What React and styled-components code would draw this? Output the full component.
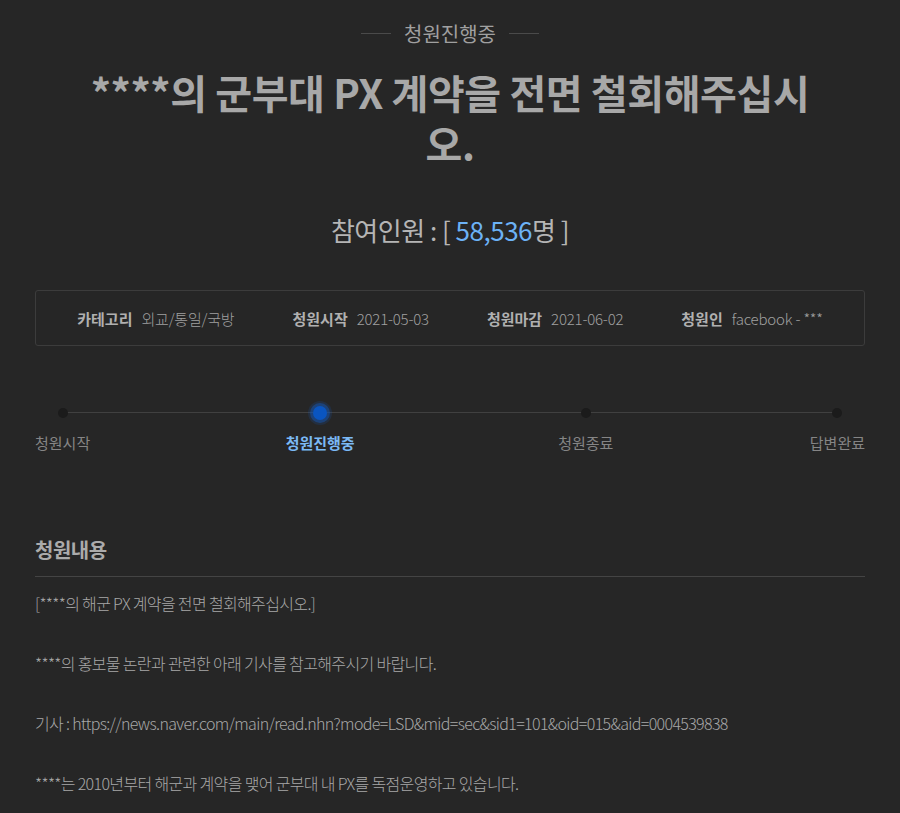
import React from "react";
import styled, { createGlobalStyle } from "styled-components";

const GlobalStyle = createGlobalStyle`
  html, body {
    margin: 0;
    padding: 0;
    background-color: #262626;
  }
  body {
    font-family: "Noto Sans CJK KR", "Noto Sans", sans-serif;
    color: #aaaaaa;
  }
  * {
    box-sizing: border-box;
  }
`;

const Page = styled.div`
  width: 830px;
  margin: 0 auto;
  padding-top: 15px;
`;

const StatusLabel = styled.div`
  display: flex;
  align-items: center;
  justify-content: center;
  gap: 13px;
  font-size: 20px;
  color: #a0a0a0;
  height: 36px;
  &::before,
  &::after {
    content: "";
    width: 30px;
    height: 1px;
    background-color: #4a4a4a;
  }
`;

const Headline = styled.h1`
  width: 740px;
  margin: 16px auto 0;
  text-align: center;
  font-size: 40px;
  line-height: 51px;
  font-weight: 700;
  color: #a8a8a8;
  letter-spacing: -0.4px;
`;

const Count = styled.div`
  margin-top: 42px;
  text-align: center;
  font-size: 26px;
  color: #b5b5b5;
  letter-spacing: -0.5px;
`;

const CountNum = styled.span`
  color: #6cb2f6;
`;

const InfoBox = styled.div`
  margin-top: 42px;
  height: 56px;
  border: 1px solid #3c3c3c;
  border-radius: 3px;
  display: flex;
  align-items: center;
  justify-content: center;
  gap: 58px;
`;

const InfoItem = styled.div`
  display: flex;
  align-items: center;
  gap: 9px;
  font-size: 15px;
`;

const InfoKey = styled.span`
  font-weight: 700;
  color: #b0b0b0;
`;

const InfoValue = styled.span`
  font-weight: 300;
  color: #a0a0a0;
  letter-spacing: -0.2px;
`;

const Stepper = styled.ol`
  position: relative;
  list-style: none;
  margin: 58px 0 0;
  padding: 0;
  display: flex;
  justify-content: space-between;
  &::before {
    content: "";
    position: absolute;
    top: 8px;
    left: 28px;
    right: 28px;
    height: 1px;
    background-color: #404040;
  }
`;

const Step = styled.li`
  position: relative;
  display: flex;
  flex-direction: column;
  align-items: center;
  gap: 14px;
  transform: translateX(${(p) => p.$shift || 0}px);
`;

const Dot = styled.span`
  width: ${(p) => (p.$active ? 14 : 10)}px;
  height: ${(p) => (p.$active ? 14 : 10)}px;
  margin-top: ${(p) => (p.$active ? 2 : 4)}px;
  margin-bottom: ${(p) => (p.$active ? -2 : 0)}px;
  border-radius: 50%;
  background-color: ${(p) => (p.$active ? "#0a55c0" : "#1b1b1b")};
  box-shadow: ${(p) =>
    p.$active
      ? "0 0 0 3px rgba(20, 90, 190, 0.45), 0 0 0 5px rgba(20, 90, 190, 0.18)"
      : "none"};
`;

const StepLabel = styled.span`
  font-size: 15px;
  color: ${(p) => (p.$active ? "#7bb9f5" : "#858585")};
  font-weight: ${(p) => (p.$active ? 700 : 400)};
`;

const Section = styled.section`
  margin-top: 82px;
`;

const SectionTitle = styled.h2`
  margin: 0;
  padding-bottom: 12px;
  font-size: 20px;
  font-weight: 700;
  color: #ababab;
  border-bottom: 1px solid #444444;
  letter-spacing: -0.5px;
`;

const Body = styled.div`
  padding-top: 11px;
  font-size: 16px;
  line-height: 30px;
  font-weight: 300;
  color: #a8a8a8;
  letter-spacing: -0.65px;
`;

const Para = styled.p`
  margin: 0 0 30px;
`;

const steps = [
  { label: "청원시작" },
  { label: "청원진행중", active: true, shift: -3 },
  { label: "청원종료", shift: 2 },
  { label: "답변완료" },
];

export default function App() {
  return (
    <>
      <GlobalStyle />
      <Page>
        <StatusLabel>청원진행중</StatusLabel>
        <Headline>****의 군부대 PX 계약을 전면 철회해주십시오.</Headline>
        <Count>
          참여인원 : [ <CountNum>58,536</CountNum>명 ]
        </Count>
        <InfoBox>
          <InfoItem>
            <InfoKey>카테고리</InfoKey>
            <InfoValue>외교/통일/국방</InfoValue>
          </InfoItem>
          <InfoItem>
            <InfoKey>청원시작</InfoKey>
            <InfoValue>2021-05-03</InfoValue>
          </InfoItem>
          <InfoItem>
            <InfoKey>청원마감</InfoKey>
            <InfoValue>2021-06-02</InfoValue>
          </InfoItem>
          <InfoItem>
            <InfoKey>청원인</InfoKey>
            <InfoValue>facebook - ***</InfoValue>
          </InfoItem>
        </InfoBox>
        <Stepper>
          {steps.map((s) => (
            <Step key={s.label} $shift={s.shift}>
              <Dot $active={s.active} />
              <StepLabel $active={s.active}>{s.label}</StepLabel>
            </Step>
          ))}
        </Stepper>
        <Section>
          <SectionTitle>청원내용</SectionTitle>
          <Body>
            <Para>[****의 해군 PX 계약을 전면 철회해주십시오.]</Para>
            <Para>****의 홍보물 논란과 관련한 아래 기사를 참고해주시기 바랍니다.</Para>
            <Para>
              기사 : https://news.naver.com/main/read.nhn?mode=LSD&amp;mid=sec&amp;sid1=101&amp;oid=015&amp;aid=0004539838
            </Para>
            <Para>****는 2010년부터 해군과 계약을 맺어 군부대 내 PX를 독점운영하고 있습니다.</Para>
          </Body>
        </Section>
      </Page>
    </>
  );
}
